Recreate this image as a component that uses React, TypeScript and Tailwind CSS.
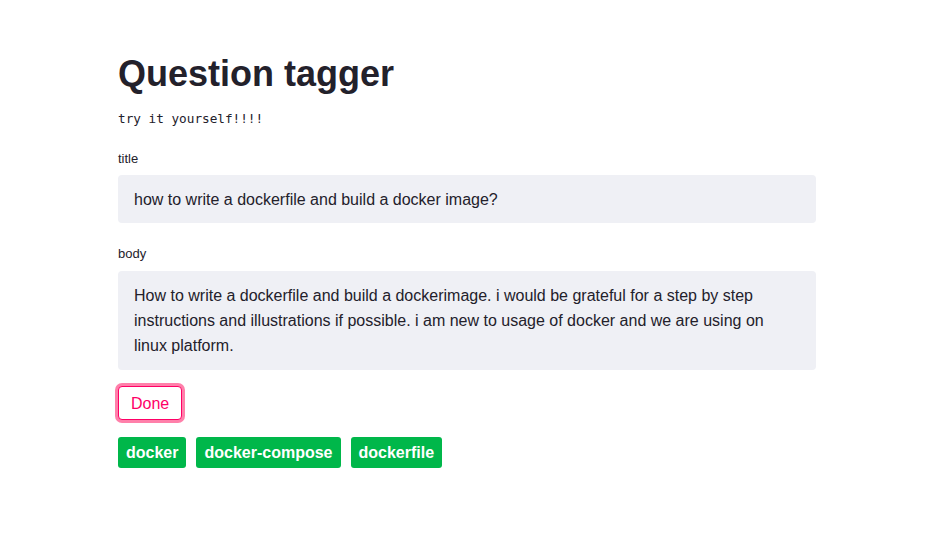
import React from "react";

const tags = ["docker", "docker-compose", "dockerfile"];

export default function App() {
  return (
    <div className="min-h-screen bg-white font-['Liberation_Sans',Arial,sans-serif] text-[#23212b]">
      <div className="ml-[118px] w-[698px] pt-[52px]">
        <h1 className="text-[36px] font-bold leading-[44px]">Question tagger</h1>
        <p className="mt-[15px] font-['DejaVu_Sans_Mono',monospace] text-[12.7px] leading-[16px]">try it yourself!!!!</p>

        <label className="mt-[24px] block text-[13px] leading-[16px]">title</label>
        <div className="mt-[8px] flex h-[48px] items-center rounded-[4px] bg-[#eff0f5] px-[16px] pt-[2px] text-[16px]">
          how to write a dockerfile and build a docker image?
        </div>

        <label className="mt-[23px] block text-[13px] leading-[16px]">body</label>
        <div className="mt-[9px] rounded-[4px] bg-[#eff0f5] px-[16px] py-[12px] text-[16px] leading-[25px]">
          How to write a dockerfile and build a dockerimage. i would be grateful for a step by step instructions and
          illustrations if possible. i am new to usage of docker and we are using on linux platform.
        </div>

        <button className="mt-[16px] h-[34px] rounded-[4px] border border-[#ff0066] bg-white px-[12px] pt-[2px] text-[16px] text-[#ff0066] ring-[3px] ring-[#ff80aa]">
          Done
        </button>

        <div className="mt-[17px] flex gap-[10px]">
          {tags.map((t) => (
            <span key={t} className="flex h-[31px] items-center rounded-[3px] bg-[#00b74a] px-[8px] pt-[1px] text-[16px] font-bold text-white">
              {t}
            </span>
          ))}
        </div>
      </div>
    </div>
  );
}
